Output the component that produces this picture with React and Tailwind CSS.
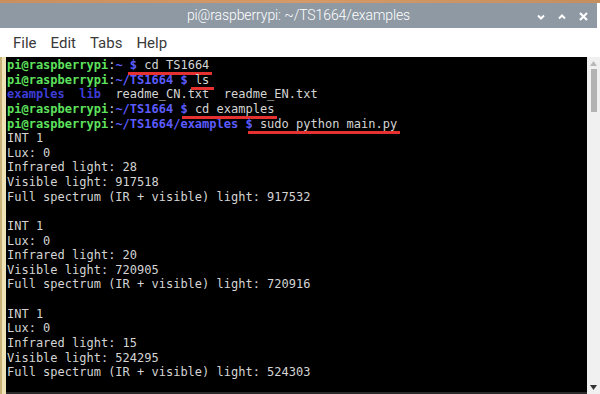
import React from "react";

const G = "text-[#5ee25e] font-bold";
const B = "text-[#5c5cff] font-bold";
const D = "text-[#3d3dd8] font-bold";
const W = "text-[#d4d4d4]";

function Mark({ children, l = 0, r = 0 }) {
  return (
    <span className="relative">
      {children}
      <span
        className="absolute bottom-[-3px] h-[3px] bg-[#e5312f]"
        style={{ left: l, right: r }}
      />
    </span>
  );
}

const reading = (ir, vis, full) => [
  "INT 1",
  "Lux: 0",
  `Infrared light: ${ir}`,
  `Visible light: ${vis}`,
  `Full spectrum (IR + visible) light: ${full}`,
];

export default function App() {
  const output = [
    ...reading(28, 917518, 917532),
    "",
    ...reading(20, 720905, 720916),
    "",
    ...reading(15, 524295, 524303),
  ];

  return (
    <div className="w-[600px] h-[394px] bg-white flex flex-col overflow-hidden">
      {/* top edge */}
      <div className="h-[3px] bg-gradient-to-r from-[#c98f5c] via-[#d49a68] to-[#c5905e]" />

      {/* title bar */}
      <div className="h-[25px] w-[597px] bg-[#8e99a4] flex items-center relative">
        <div className="flex-1 text-center text-white text-[14px] font-['Roboto',sans-serif] font-light tracking-[-0.1px]">
          pi@raspberrypi: ~/TS1664/examples
        </div>
        <div className="absolute right-[9px] top-[9px] flex items-center gap-[13px] text-white">
          <svg width="8" height="6" viewBox="0 0 8 6">
            <path d="M1 1.5 L4 4.5 L7 1.5" stroke="white" strokeWidth="2" fill="none" />
          </svg>
          <svg width="8" height="6" viewBox="0 0 8 6">
            <path d="M1 4.5 L4 1.5 L7 4.5" stroke="white" strokeWidth="2" fill="none" />
          </svg>
          <svg width="9" height="9" viewBox="0 0 9 9">
            <path d="M1 1 L8 8 M8 1 L1 8" stroke="white" strokeWidth="2.2" fill="none" />
          </svg>
        </div>
      </div>

      {/* menu bar */}
      <div className="h-[29px] flex items-center gap-[14px] pl-[13px] pt-[2px] text-[15px] text-[#3a3a3a] font-['Roboto',sans-serif]">
        <span>File</span>
        <span>Edit</span>
        <span>Tabs</span>
        <span>Help</span>
      </div>

      {/* terminal area */}
      <div className="flex-1 flex min-h-0">
        <div className="w-[6px] bg-[#efe2b4] border-l-[2px] border-[#c9b27a]" />
        <div className="flex-1 bg-black pl-[1px] pt-[1px] border-b-[2px] border-[#2a2a2a] font-['DejaVu_Sans_Mono',monospace] text-[12px] leading-[14.62px] whitespace-pre overflow-hidden">
          <div>
            <span className={G}>pi@raspberrypi</span>
            <span className={W}>:</span>
            <span className={B}>~ </span>
            <Mark l={-2} r={-3}>
              <span className={B}>$</span>
              <span className={W}> cd TS1664</span>
            </Mark>
          </div>
          <div>
            <span className={G}>pi@raspberrypi</span>
            <span className={W}>:</span>
            <span className={B}>~/TS1664 $ </span>
            <Mark l={-4} r={-5}>
              <span className={W}>ls</span>
            </Mark>
          </div>
          <div>
            <span className={D}>examples</span>
            <span className={W}>  </span>
            <span className={D}>lib</span>
            <span className={W}>  readme_CN.txt  readme_EN.txt</span>
          </div>
          <div>
            <span className={G}>pi@raspberrypi</span>
            <span className={W}>:</span>
            <span className={B}>~/TS1664 </span>
            <Mark l={2} r={-3}>
              <span className={B}>$</span>
              <span className={W}> cd examples</span>
            </Mark>
          </div>
          <div>
            <span className={G}>pi@raspberrypi</span>
            <span className={W}>:</span>
            <span className={B}>~/TS1664/examples </span>
            <Mark l={3} r={-3}>
              <span className={B}>$</span>
              <span className={W}> sudo python main.py</span>
            </Mark>
          </div>
          {output.map((line, i) => (
            <div key={i} className={W}>
              {line || " "}
            </div>
          ))}
        </div>
        <div className="w-[13px] bg-[#f0f0f0] flex flex-col items-center pt-[4px] pb-[4px]">
          <svg width="7" height="5" viewBox="0 0 7 5">
            <path d="M0 5 L3.5 0 L7 5 Z" fill="#b8b8b8" />
          </svg>
          <div className="mt-[3px] w-[6px] h-[43px] bg-[#b3b3b3]" />
          <div className="flex-1" />
          <svg width="7" height="5" viewBox="0 0 7 5">
            <path d="M0 0 L7 0 L3.5 5 Z" fill="#333" />
          </svg>
        </div>
      </div>
    </div>
  );
}
